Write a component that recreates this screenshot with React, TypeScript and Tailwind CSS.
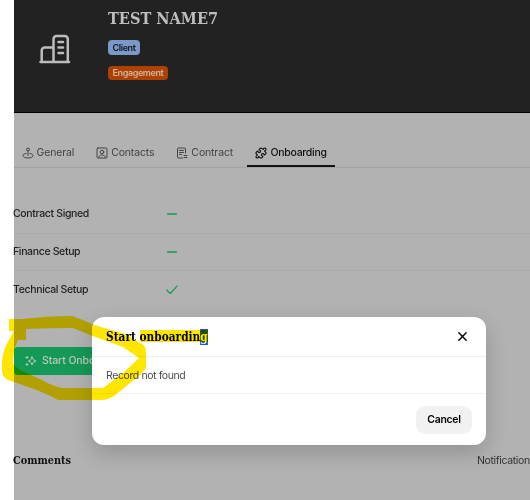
import type { ReactNode } from 'react'
import { Puzzle } from 'lucide-react'

const tabs = [
  {
    name: 'General',
    icon: (
      <>
        <circle cx="12" cy="5" r="3" />
        <path d="M12 8v9M8 13c-4 .5-6 2-6 4 0 3 4 5 10 5s10-2 10-5c0-2-2-3.500-6-4" />
      </>
    ),
  },
  {
    name: 'Contacts',
    icon: (
      <>
        <rect x="2" y="2" width="20" height="20" rx="2" />
        <circle cx="12" cy="10" r="3.500" />
        <path d="M6 21v-2l3-3h6l3 3v2" />
      </>
    ),
  },
  {
    name: 'Contract',
    icon: <path d="M19 12V4a2 2 0 0 0-2-2H5a2 2 0 0 0-2 2v16a2 2 0 0 0 2 2h8M7 7h8M7 11h8M7 15h4M16 17h6M16 21h6" />,
  },
  {
    name: 'Onboarding',
    active: true,
    icon: <Puzzle size={24} strokeWidth={2.4} />,
  },
]

const steps = [
  { name: 'Contract Signed', done: false },
  { name: 'Finance Setup', done: false },
  { name: 'Technical Setup', done: true },
]

function Icon({ children, className }: { children: ReactNode; className: string }) {
  return (
    <svg viewBox="0 0 24 24" fill="none" stroke="currentColor" strokeWidth="2" strokeLinecap="round" strokeLinejoin="round" className={className}>
      {children}
    </svg>
  )
}

function Header() {
  return (
    <header className="flex h-[113px] shrink-0 border-b border-black bg-[#222222] pl-[25px]">
      <svg viewBox="0 0 32 30" fill="none" stroke="#bdbdbd" strokeWidth="2.500" strokeLinecap="round" strokeLinejoin="round" className="mt-[34px] h-[30px] w-8 shrink-0">
        <path d="M1.500 28h28.500M2.700 28V16.500a3 3 0 0 1 3-3h8.800M14.500 28V5a3 3 0 0 1 3-3h8.300a3 3 0 0 1 3 3v23M19.500 8h4.500M19.500 13.500h4.500M19.500 19h4.500" />
      </svg>
      <div className="ml-[37px] flex flex-col items-start">
        <h1 className="mt-[9px] h-5 origin-left scale-x-[1.01] whitespace-nowrap font-['DejaVu_Serif_Condensed','DejaVu_Serif',serif] text-[16px] leading-5 font-bold text-[#bebebe]">TEST NAME7</h1>
        <span className="mt-[11px] h-[15px] rounded-[4px] bg-[#7b98c6] px-[4.500px] text-[9px] leading-[15px] font-semibold tracking-[-0.4px] text-[#111722]">Client</span>
        <span className="mt-[11px] h-[14px] rounded-[4px] bg-[#ad4100] px-[4.500px] text-[9px] leading-[14px] font-semibold tracking-[-0.4px] text-[#d0b4a1]">Engagement</span>
      </div>
    </header>
  )
}

function Dialog() {
  return (
    <section className="absolute top-[317px] left-[92px] flex h-[128px] w-[394px] flex-col rounded-[12px] bg-white shadow-[0_8px_22px_rgba(0,0,0,0.18)]">
      <div className="flex h-10 items-center justify-between border-b border-[#eeeeee] pr-[18px] pl-[14px]">
        <h2 className="flex origin-left scale-x-[0.98] whitespace-nowrap font-['DejaVu_Serif_Condensed','DejaVu_Serif',serif] text-[12px] leading-4 font-bold text-black">
          Start onboardin<span className="bg-[#2358c7] text-white">g</span>
        </h2>
        <Icon className="h-[11px] w-[11px] text-black">
          <path d="m4 4 16 16M20 4 4 20" strokeWidth="3" />
        </Icon>
      </div>
      <p className="flex h-[37px] items-center border-b border-[#f3f3f3] pt-px pl-[14px] text-[10.500px] tracking-[-0.4px] text-[#4b4b4b]">Record not found</p>
      <div className="flex flex-1 items-center justify-end pr-[14px]">
        <button className="h-7 w-14 rounded-[9px] bg-[#f1f1f1] text-[10.500px] font-semibold tracking-[-0.3px] text-black">Cancel</button>
      </div>
    </section>
  )
}

function Marker() {
  return (
    <svg viewBox="0 0 530 500" fill="#ffe600" className="pointer-events-none absolute inset-0 h-[500px] w-[530px] mix-blend-multiply">
      <path fillRule="evenodd" d="M9 319H22Q48 316 72 316Q84 320 94 325L125 334L140 343Q146 345 146 352V368L140 375L114 396Q108 400 100 400H58Q45 393 34 389L8 380Q2 377 2 370V360Q4 348 9 340L14 331H9ZM26 329V340H18Q13 350 13 364L20 370L42 380Q52 386 62 388H103L123 373L139 358L123 347L90 335L73 328Q48 328 26 329Z" />
      <path d="M140 330H208V342H140Z" />
    </svg>
  )
}

export default function App() {
  return (
    <div className="relative flex h-[500px] w-[530px] overflow-hidden bg-white pl-[14px] font-['Inter',sans-serif]">
      <main className="flex min-w-0 flex-1 flex-col bg-[#b2b2b2]">
        <Header />
        <nav className="mt-[25px] flex h-[30px] shrink-0 border-b border-[#a1a1a1]">
          {tabs.map((tab) => (
            <div
              key={tab.name}
              className={
                tab.active
                  ? '-ml-px flex h-[29px] items-center gap-1 border-b-2 border-[#111111] px-2 pt-[2px] text-[10.500px] font-medium tracking-[-0.3px] text-[#111111]'
                  : 'mr-[6.500px] flex items-center gap-[3px] pr-2 pl-[7.500px] text-[10.500px] tracking-[-0.150px] text-[#444444]'
              }
            >
              <Icon className="h-3 w-3 shrink-0">{tab.icon}</Icon>
              {tab.name}
            </div>
          ))}
        </nav>
        <div className="mt-[28px] flex shrink-0 flex-col">
          {steps.map((step) => (
            <div key={step.name} className="flex h-[37.500px] items-center border-b border-[#aaaaaa] text-[10.500px] font-medium tracking-[-0.350px] text-[#222222] last:h-[37px] last:border-0">
              <span className="-ml-px w-[152px]">{step.name}</span>
              <Icon className="h-[14px] w-[14px] text-[#159957]">
                {step.done ? <path d="m3 12 6 6L21 5" /> : <path d="M4.500 12h15" strokeWidth="2.600" />}
              </Icon>
            </div>
          ))}
        </div>
        <div className="mt-[39px] flex h-7 w-[110px] shrink-0 items-center gap-[5px] rounded-[4px] bg-[#159957] pl-[11px] text-[10.500px] font-medium tracking-[-0.1px] whitespace-nowrap text-[#c0c6bf]">
          <Icon className="h-3 w-3 shrink-0">
            <path d="M14 4q1 7 8 8-7 1-8 8-1-7-7-8 6-1 7-8zM4 3v4M2 5h4M4 17v4M2 19h4" />
          </Icon>
          Start Onboarding
        </div>
        <div className="mt-[78px] flex items-center justify-between">
          <h3 className="-ml-px origin-left scale-x-[0.98] font-['DejaVu_Serif_Condensed','DejaVu_Serif',serif] text-[11px] font-bold text-[#111111]">Comments</h3>
          <span className="-mr-[5px] text-[10.500px] tracking-[-0.350px] text-[#333333]">Notifications</span>
        </div>
      </main>
      <Dialog />
      <Marker />
    </div>
  )
}
